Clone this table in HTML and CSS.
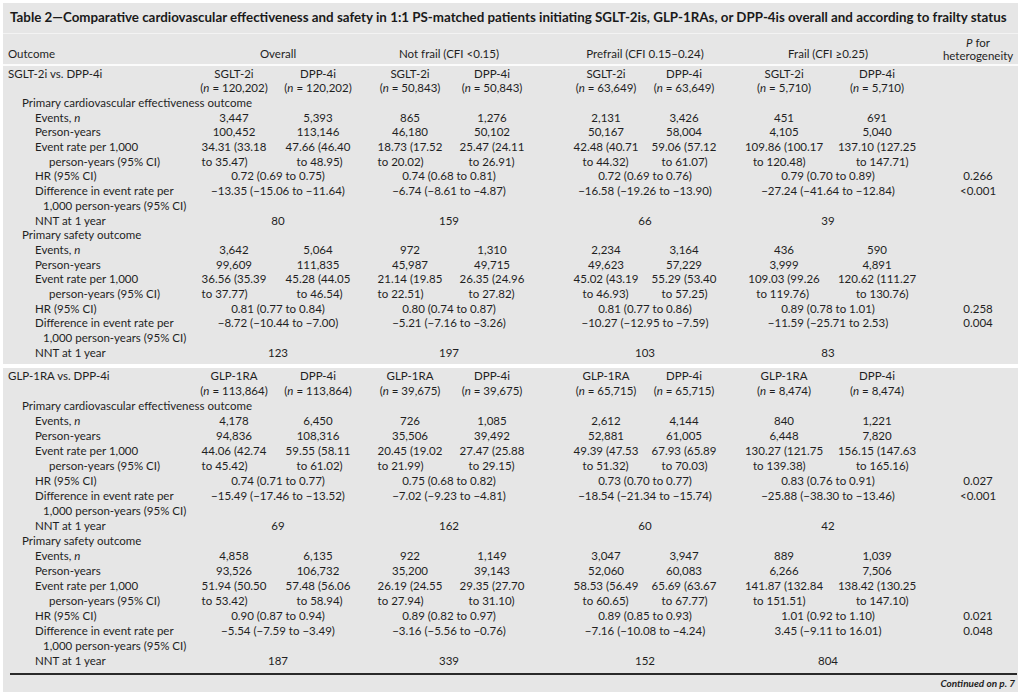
FILE: index.html
```html
<!DOCTYPE html>
<html lang="en">
<head>
<meta charset="utf-8">
<title>Table 2</title>
<link rel="stylesheet" href="styles.css">
</head>
<body>
<div class="sheet">
  <div class="title">Table 2—Comparative cardiovascular effectiveness and safety in 1:1 PS-matched patients initiating SGLT-2is, GLP-1RAs, or DPP-4is overall and according to frailty status</div>
  <table class="tbl">
    <colgroup>
      <col class="w-lab"><col class="w-a1"><col class="w-a2"><col class="w-b1"><col class="w-b2"><col class="w-c1"><col class="w-c2"><col class="w-d1"><col class="w-d2"><col class="w-p">
    </colgroup>
    <thead>
      <tr class="hd">
        <th class="lab i0">Outcome</th>
        <th colspan="2" class="ga">Overall</th>
        <th colspan="2" class="gb">Not frail (CFI &lt;0.15)</th>
        <th colspan="2" class="gc">Prefrail (CFI 0.15–0.24)</th>
        <th colspan="2" class="gd">Frail (CFI ≥0.25)</th>
        <th class="p ph"><i>P</i> for<br>heterogeneity</th>
      </tr>
    </thead>
    <tbody class="s1">
      <tr><td class="lab i0">SGLT-2i vs. DPP-4i</td><td class="a1">SGLT-2i</td><td class="a2">DPP-4i</td><td class="b1">SGLT-2i</td><td class="b2">DPP-4i</td><td class="c1">SGLT-2i</td><td class="c2">DPP-4i</td><td class="d1">SGLT-2i</td><td class="d2">DPP-4i</td><td class="p"></td></tr>
      <tr><td class="lab"></td><td class="a1">(<i>n</i> = 120,202)</td><td class="a2">(<i>n</i> = 120,202)</td><td class="b1">(<i>n</i> = 50,843)</td><td class="b2">(<i>n</i> = 50,843)</td><td class="c1">(<i>n</i> = 63,649)</td><td class="c2">(<i>n</i> = 63,649)</td><td class="d1">(<i>n</i> = 5,710)</td><td class="d2">(<i>n</i> = 5,710)</td><td class="p"></td></tr>
      <tr><td class="lab i1" colspan="10">Primary cardiovascular effectiveness outcome</td></tr>
      <tr><td class="lab i2">Events, <i>n</i></td><td class="a1">3,447</td><td class="a2">5,393</td><td class="b1">865</td><td class="b2">1,276</td><td class="c1">2,131</td><td class="c2">3,426</td><td class="d1">451</td><td class="d2">691</td><td class="p"></td></tr>
      <tr><td class="lab i2">Person-years</td><td class="a1">100,452</td><td class="a2">113,146</td><td class="b1">46,180</td><td class="b2">50,102</td><td class="c1">50,167</td><td class="c2">58,004</td><td class="d1">4,105</td><td class="d2">5,040</td><td class="p"></td></tr>
      <tr>
        <td class="lab i2" rowspan="2">Event rate per 1,000<span class="l3">person-years (95% CI)</span></td>
        <td class="a1" rowspan="2"><span class="two">34.31 (33.18<span class="in">to 35.47)</span></span></td>
        <td class="a2" rowspan="2"><span class="two">47.66 (46.40<span class="in">to 48.95)</span></span></td>
        <td class="b1" rowspan="2"><span class="two">18.73 (17.52<span class="in">to 20.02)</span></span></td>
        <td class="b2" rowspan="2"><span class="two">25.47 (24.11<span class="in">to 26.91)</span></span></td>
        <td class="c1" rowspan="2"><span class="two">42.48 (40.71<span class="in">to 44.32)</span></span></td>
        <td class="c2" rowspan="2"><span class="two">59.06 (57.12<span class="in">to 61.07)</span></span></td>
        <td class="d1" rowspan="2"><span class="two">109.86 (100.17<span class="in">to 120.48)</span></span></td>
        <td class="d2" rowspan="2"><span class="two">137.10 (127.25<span class="in">to 147.71)</span></span></td>
        <td class="p"></td>
      </tr>
      <tr><td class="p"></td></tr>
      <tr><td class="lab i2">HR (95% CI)</td><td colspan="2" class="ga">0.72 (0.69 to 0.75)</td><td colspan="2" class="gb">0.74 (0.68 to 0.81)</td><td colspan="2" class="gc">0.72 (0.69 to 0.76)</td><td colspan="2" class="gd">0.79 (0.70 to 0.89)</td><td class="p">0.266</td></tr>
      <tr><td class="lab i2" rowspan="2">Difference in event rate per<span class="l4">1,000 person-years (95% CI)</span></td><td colspan="2" class="ga">−13.35 (−15.06 to −11.64)</td><td colspan="2" class="gb">−6.74 (−8.61 to −4.87)</td><td colspan="2" class="gc">−16.58 (−19.26 to −13.90)</td><td colspan="2" class="gd">−27.24 (−41.64 to −12.84)</td><td class="p">&lt;0.001</td></tr>
      <tr><td colspan="9"></td></tr>
      <tr class="nnt"><td class="lab i2">NNT at 1 year</td><td colspan="2" class="ga">80</td><td colspan="2" class="gb">159</td><td colspan="2" class="gc">66</td><td colspan="2" class="gd">39</td><td class="p"></td></tr>
      <tr><td class="lab i1" colspan="10">Primary safety outcome</td></tr>
      <tr><td class="lab i2">Events, <i>n</i></td><td class="a1">3,642</td><td class="a2">5,064</td><td class="b1">972</td><td class="b2">1,310</td><td class="c1">2,234</td><td class="c2">3,164</td><td class="d1">436</td><td class="d2">590</td><td class="p"></td></tr>
      <tr><td class="lab i2">Person-years</td><td class="a1">99,609</td><td class="a2">111,835</td><td class="b1">45,987</td><td class="b2">49,715</td><td class="c1">49,623</td><td class="c2">57,229</td><td class="d1">3,999</td><td class="d2">4,891</td><td class="p"></td></tr>
      <tr>
        <td class="lab i2" rowspan="2">Event rate per 1,000<span class="l3">person-years (95% CI)</span></td>
        <td class="a1" rowspan="2"><span class="two">36.56 (35.39<span class="in">to 37.77)</span></span></td>
        <td class="a2" rowspan="2"><span class="two">45.28 (44.05<span class="in">to 46.54)</span></span></td>
        <td class="b1" rowspan="2"><span class="two">21.14 (19.85<span class="in">to 22.51)</span></span></td>
        <td class="b2" rowspan="2"><span class="two">26.35 (24.96<span class="in">to 27.82)</span></span></td>
        <td class="c1" rowspan="2"><span class="two">45.02 (43.19<span class="in">to 46.93)</span></span></td>
        <td class="c2" rowspan="2"><span class="two">55.29 (53.40<span class="in">to 57.25)</span></span></td>
        <td class="d1" rowspan="2"><span class="two">109.03 (99.26<span class="in">to 119.76)</span></span></td>
        <td class="d2" rowspan="2"><span class="two">120.62 (111.27<span class="in">to 130.76)</span></span></td>
        <td class="p"></td>
      </tr>
      <tr><td class="p"></td></tr>
      <tr><td class="lab i2">HR (95% CI)</td><td colspan="2" class="ga">0.81 (0.77 to 0.84)</td><td colspan="2" class="gb">0.80 (0.74 to 0.87)</td><td colspan="2" class="gc">0.81 (0.77 to 0.86)</td><td colspan="2" class="gd">0.89 (0.78 to 1.01)</td><td class="p">0.258</td></tr>
      <tr><td class="lab i2" rowspan="2">Difference in event rate per<span class="l4">1,000 person-years (95% CI)</span></td><td colspan="2" class="ga">−8.72 (−10.44 to −7.00)</td><td colspan="2" class="gb">−5.21 (−7.16 to −3.26)</td><td colspan="2" class="gc">−10.27 (−12.95 to −7.59)</td><td colspan="2" class="gd">−11.59 (−25.71 to 2.53)</td><td class="p">0.004</td></tr>
      <tr><td colspan="9"></td></tr>
      <tr class="nnt"><td class="lab i2">NNT at 1 year</td><td colspan="2" class="ga">123</td><td colspan="2" class="gb">197</td><td colspan="2" class="gc">103</td><td colspan="2" class="gd">83</td><td class="p"></td></tr>
      <tr class="gap"><td colspan="10"></td></tr>
    </tbody>
    <tbody class="s2">
      <tr><td class="lab i0">GLP-1RA vs. DPP-4i</td><td class="a1">GLP-1RA</td><td class="a2">DPP-4i</td><td class="b1">GLP-1RA</td><td class="b2">DPP-4i</td><td class="c1">GLP-1RA</td><td class="c2">DPP-4i</td><td class="d1">GLP-1RA</td><td class="d2">DPP-4i</td><td class="p"></td></tr>
      <tr><td class="lab"></td><td class="a1">(<i>n</i> = 113,864)</td><td class="a2">(<i>n</i> = 113,864)</td><td class="b1">(<i>n</i> = 39,675)</td><td class="b2">(<i>n</i> = 39,675)</td><td class="c1">(<i>n</i> = 65,715)</td><td class="c2">(<i>n</i> = 65,715)</td><td class="d1">(<i>n</i> = 8,474)</td><td class="d2">(<i>n</i> = 8,474)</td><td class="p"></td></tr>
      <tr><td class="lab i1" colspan="10">Primary cardiovascular effectiveness outcome</td></tr>
      <tr><td class="lab i2">Events, <i>n</i></td><td class="a1">4,178</td><td class="a2">6,450</td><td class="b1">726</td><td class="b2">1,085</td><td class="c1">2,612</td><td class="c2">4,144</td><td class="d1">840</td><td class="d2">1,221</td><td class="p"></td></tr>
      <tr><td class="lab i2">Person-years</td><td class="a1">94,836</td><td class="a2">108,316</td><td class="b1">35,506</td><td class="b2">39,492</td><td class="c1">52,881</td><td class="c2">61,005</td><td class="d1">6,448</td><td class="d2">7,820</td><td class="p"></td></tr>
      <tr>
        <td class="lab i2" rowspan="2">Event rate per 1,000<span class="l3">person-years (95% CI)</span></td>
        <td class="a1" rowspan="2"><span class="two">44.06 (42.74<span class="in">to 45.42)</span></span></td>
        <td class="a2" rowspan="2"><span class="two">59.55 (58.11<span class="in">to 61.02)</span></span></td>
        <td class="b1" rowspan="2"><span class="two">20.45 (19.02<span class="in">to 21.99)</span></span></td>
        <td class="b2" rowspan="2"><span class="two">27.47 (25.88<span class="in">to 29.15)</span></span></td>
        <td class="c1" rowspan="2"><span class="two">49.39 (47.53<span class="in">to 51.32)</span></span></td>
        <td class="c2" rowspan="2"><span class="two">67.93 (65.89<span class="in">to 70.03)</span></span></td>
        <td class="d1" rowspan="2"><span class="two">130.27 (121.75<span class="in">to 139.38)</span></span></td>
        <td class="d2" rowspan="2"><span class="two">156.15 (147.63<span class="in">to 165.16)</span></span></td>
        <td class="p"></td>
      </tr>
      <tr><td class="p"></td></tr>
      <tr><td class="lab i2">HR (95% CI)</td><td colspan="2" class="ga">0.74 (0.71 to 0.77)</td><td colspan="2" class="gb">0.75 (0.68 to 0.82)</td><td colspan="2" class="gc">0.73 (0.70 to 0.77)</td><td colspan="2" class="gd">0.83 (0.76 to 0.91)</td><td class="p">0.027</td></tr>
      <tr><td class="lab i2" rowspan="2">Difference in event rate per<span class="l4">1,000 person-years (95% CI)</span></td><td colspan="2" class="ga">−15.49 (−17.46 to −13.52)</td><td colspan="2" class="gb">−7.02 (−9.23 to −4.81)</td><td colspan="2" class="gc">−18.54 (−21.34 to −15.74)</td><td colspan="2" class="gd">−25.88 (−38.30 to −13.46)</td><td class="p">&lt;0.001</td></tr>
      <tr><td colspan="9"></td></tr>
      <tr class="nnt"><td class="lab i2">NNT at 1 year</td><td colspan="2" class="ga">69</td><td colspan="2" class="gb">162</td><td colspan="2" class="gc">60</td><td colspan="2" class="gd">42</td><td class="p"></td></tr>
      <tr><td class="lab i1" colspan="10">Primary safety outcome</td></tr>
      <tr><td class="lab i2">Events, <i>n</i></td><td class="a1">4,858</td><td class="a2">6,135</td><td class="b1">922</td><td class="b2">1,149</td><td class="c1">3,047</td><td class="c2">3,947</td><td class="d1">889</td><td class="d2">1,039</td><td class="p"></td></tr>
      <tr><td class="lab i2">Person-years</td><td class="a1">93,526</td><td class="a2">106,732</td><td class="b1">35,200</td><td class="b2">39,143</td><td class="c1">52,060</td><td class="c2">60,083</td><td class="d1">6,266</td><td class="d2">7,506</td><td class="p"></td></tr>
      <tr>
        <td class="lab i2" rowspan="2">Event rate per 1,000<span class="l3">person-years (95% CI)</span></td>
        <td class="a1" rowspan="2"><span class="two">51.94 (50.50<span class="in">to 53.42)</span></span></td>
        <td class="a2" rowspan="2"><span class="two">57.48 (56.06<span class="in">to 58.94)</span></span></td>
        <td class="b1" rowspan="2"><span class="two">26.19 (24.55<span class="in">to 27.94)</span></span></td>
        <td class="b2" rowspan="2"><span class="two">29.35 (27.70<span class="in">to 31.10)</span></span></td>
        <td class="c1" rowspan="2"><span class="two">58.53 (56.49<span class="in">to 60.65)</span></span></td>
        <td class="c2" rowspan="2"><span class="two">65.69 (63.67<span class="in">to 67.77)</span></span></td>
        <td class="d1" rowspan="2"><span class="two">141.87 (132.84<span class="in">to 151.51)</span></span></td>
        <td class="d2" rowspan="2"><span class="two">138.42 (130.25<span class="in">to 147.10)</span></span></td>
        <td class="p"></td>
      </tr>
      <tr><td class="p"></td></tr>
      <tr><td class="lab i2">HR (95% CI)</td><td colspan="2" class="ga">0.90 (0.87 to 0.94)</td><td colspan="2" class="gb">0.89 (0.82 to 0.97)</td><td colspan="2" class="gc">0.89 (0.85 to 0.93)</td><td colspan="2" class="gd">1.01 (0.92 to 1.10)</td><td class="p">0.021</td></tr>
      <tr><td class="lab i2" rowspan="2">Difference in event rate per<span class="l4">1,000 person-years (95% CI)</span></td><td colspan="2" class="ga">−5.54 (−7.59 to −3.49)</td><td colspan="2" class="gb">−3.16 (−5.56 to −0.76)</td><td colspan="2" class="gc">−7.16 (−10.08 to −4.24)</td><td colspan="2" class="gd">3.45 (−9.11 to 16.01)</td><td class="p">0.048</td></tr>
      <tr><td colspan="9"></td></tr>
      <tr class="nnt"><td class="lab i2">NNT at 1 year</td><td colspan="2" class="ga">187</td><td colspan="2" class="gb">339</td><td colspan="2" class="gc">152</td><td colspan="2" class="gd">804</td><td class="p"></td></tr>
    </tbody>
  </table>
  <div class="foot">Continued on p. 7</div>
</div>
</body>
</html>
```

FILE: styles.css
```css
* { box-sizing: border-box; }
html, body { margin: 0; padding: 0; background: #ffffff; }
body {
  font-family: Lato, "Open Sans", "Liberation Sans", sans-serif;
  color: #1f1f1f;
}
.sheet {
  margin: 3px 6px 0 3px;
  height: 689px;
  background: #e6e6e6;
  overflow: hidden;
}
.title {
  height: 30px;
  line-height: 28px;
  padding-left: 7px;
  font-size: 13.35px;
  font-weight: 700;
  white-space: nowrap;
  color: #1a1a1a;
}
.tbl {
  width: 100%;
  border-collapse: collapse;
  table-layout: fixed;
  font-size: 11.5px;
}
.w-lab { width: 189px; }
.w-a1 { width: 84px; }
.w-a2 { width: 88px; }
.w-b1 { width: 88px; }
.w-b2 { width: 94px; }
.w-c1 { width: 100px; }
.w-c2 { width: 90px; }
.w-d1 { width: 92px; }
.w-d2 { width: 92px; }
.w-p { width: 98px; }

.tbl th, .tbl td {
  padding: 0;
  font-weight: 400;
  text-align: center;
  white-space: nowrap;
  vertical-align: top;
}
.hd {
  height: 31px;
  border-top: 1px solid #f3f3f3;
  border-bottom: 2px solid #fbfbfb;
}
.hd th {
  vertical-align: bottom;
  line-height: 13px;
  padding-bottom: 4px;
}
.hd th.ph { padding-bottom: 2px; }

.s1 tr { height: 14.7px; }
.s1 td { line-height: 14.7px; }
.s2 tr { height: 15px; }
.s2 td { line-height: 15px; }
.s1 tr:first-child td { padding-top: 1px; }
.tbl tr.gap { height: 5px; border-bottom: 4px solid #ffffff; }

.lab { text-align: left !important; }
.i0 { padding-left: 5px !important; }
.i1 { padding-left: 19px !important; }
.i2 { padding-left: 32px !important; }
.l3 { display: block; padding-left: 14px; }
.l4 { display: block; padding-left: 8px; }

.a2 { padding-right: 4px !important; }
.b1 { padding-left: 4px !important; }
.b2 { padding-right: 14px !important; }
.c1 { padding-left: 20px !important; }
.c2 { padding-right: 14px !important; }
.d1 { padding-left: 8px !important; padding-right: 4px !important; }
.d2 { padding-left: 6px !important; }
.p { padding-left: 18px !important; }
.gb { padding-right: 12px !important; }
.gc { padding-left: 8px !important; }

.two { display: inline-block; text-align: left; }
.two .in { display: block; }
.a2 .in { padding-left: 11px; }
.b2 .in { padding-left: 9px; }
.c1 .in { padding-left: 9px; }
.c2 .in { padding-left: 10px; }
.d1 .in { padding-left: 8px; }
.d2 .in { padding-left: 18px; }

.foot {
  border-top: 2px solid #2a2a2a;
  margin: 5px 1px 0 7px;
  text-align: right;
  font-size: 10px;
  font-weight: 700;
  font-style: italic;
  line-height: 16px;
  padding-right: 2px;
}
```
